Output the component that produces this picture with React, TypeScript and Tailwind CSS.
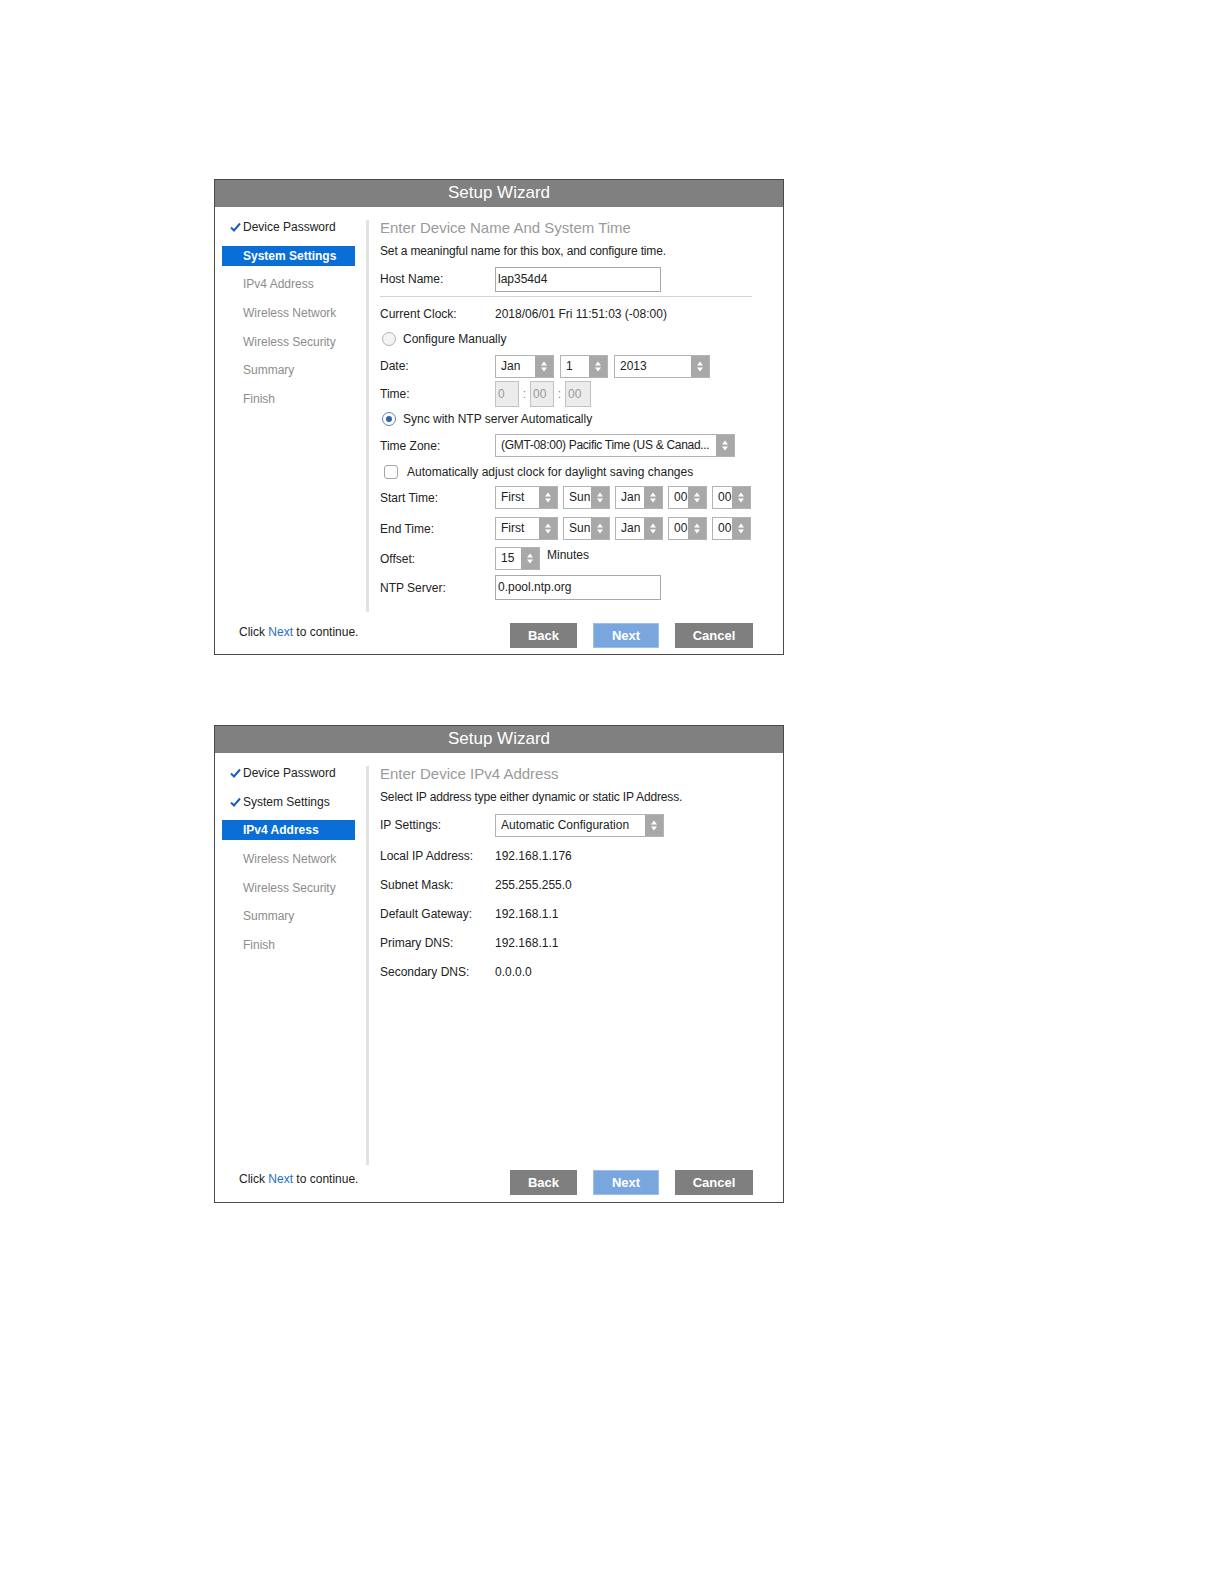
import React from "react";

const FONT = { fontFamily: '"Liberation Sans", Arial, sans-serif' };

// little up/down arrows used on every select box
const Spin = () => (
  <svg width="8" height="13" viewBox="0 0 8 13">
    <path d="M4 1.5L7 5.5H1Z" fill="#fff" />
    <path d="M4 11.5L1 7.5H7Z" fill="#fff" />
  </svg>
);

const Check = () => (
  <svg width="11" height="10" viewBox="0 0 11 10" className="absolute left-[8px] top-[5px]">
    <path d="M1 5.5L4 8.5L10 1.5" stroke="#1a5fb8" strokeWidth="2" fill="none" />
  </svg>
);

const Sel = ({ v, className, textClass = "" }: { v: string; className: string; textClass?: string }) => (
  <div className={`flex h-[23px] border border-[#b3b3b3] bg-white ${className}`}>
    <span className={`flex-1 overflow-hidden whitespace-nowrap pl-[5px] text-[12px] leading-[21px] text-[#222] ${textClass}`}>{v}</span>
    <span className="flex w-[18px] shrink-0 items-center justify-center bg-[#a8a8a8]">
      <Spin />
    </span>
  </div>
);

const Row = ({ label, className, children }: { label: string; className: string; children?: React.ReactNode }) => (
  <div className={`flex items-center ${className}`}>
    <span className="w-[115px] shrink-0 text-[12px] text-[#222]">{label}</span>
    {children}
  </div>
);

const Radio = ({ on }: { on?: boolean }) => (
  <span
    className={`flex h-[14px] w-[14px] items-center justify-center rounded-full border ${
      on ? "border-[#5b7fb5] bg-white" : "border-[#b0b0b0] bg-[#f4f4f4]"
    }`}
  >
    {on && <span className="h-[6px] w-[6px] rounded-full bg-[#2c63b5]" />}
  </span>
);

const steps = ["Device Password", "System Settings", "IPv4 Address", "Wireless Network", "Wireless Security", "Summary", "Finish"];

const Sidebar = ({ current }: { current: number }) => (
  <div className="flex w-[133px] flex-col gap-[8.67px]">
    {steps.map((s, i) => (
      <div
        key={s}
        className={`relative h-[20px] pl-[21px] text-[12px] leading-[20px] ${
          i === current ? "bg-[#0a6ed7] font-bold text-white" : i < current ? "text-[#222]" : "text-[#8c8c8c]"
        }`}
      >
        {i < current && <Check />}
        {s}
      </div>
    ))}
  </div>
);

const Footer = ({ className }: { className: string }) => (
  <div className={`flex justify-between pl-[24px] pr-[30px] ${className}`}>
    <span className="mt-[1px] text-[12px] leading-[16px] text-[#222]">
      Click <span className="text-[#1f6fc6]">Next</span> to continue.
    </span>
    <div className="flex gap-[16px]">
      <button className="h-[25px] w-[67px] bg-[#7f7f7f] text-[13px] font-bold text-white">Back</button>
      <button className="h-[25px] w-[66px] border border-[#9cc0ec] bg-[#79a6dd] text-[13px] font-bold text-white">Next</button>
      <button className="h-[25px] w-[78px] bg-[#7f7f7f] text-[13px] font-bold text-white">Cancel</button>
    </div>
  </div>
);

const Panel = ({
  current,
  bodyClass,
  footerClass,
  children,
}: {
  current: number;
  bodyClass: string;
  footerClass: string;
  children: React.ReactNode;
}) => (
  <div className="w-[570px] border border-[#4a4a4a] bg-white">
    <div className="h-[27px] bg-[#808080] text-center text-[17px] leading-[26px] text-white">Setup Wizard</div>
    <div className={`flex pl-[7px] pt-[10px] ${bodyClass}`}>
      <Sidebar current={current} />
      <div className="ml-[11px] mt-[3px] w-[3px] bg-[#e2e2e2]" />
      <div className="ml-[11px] flex-1">{children}</div>
    </div>
    <Footer className={footerClass} />
  </div>
);

const TimeBox = ({ v, className }: { v: string; className: string }) => (
  <span className={`h-[26px] border border-[#c2c2c2] bg-[#ececec] pl-[2px] text-[12px] leading-[24px] text-[#999] ${className}`}>
    {v}
  </span>
);

const DstSelects = () => (
  <div className="flex gap-[5px]">
    <Sel v="First" className="w-[63px]" />
    <Sel v="Sun" className="w-[47px]" />
    <Sel v="Jan" className="w-[48px]" />
    <Sel v="00" className="w-[39px]" />
    <Sel v="00" className="w-[39px]" />
  </div>
);

export default function App() {
  return (
    <div className="pl-[214px] pt-[179px]" style={FONT}>
      <Panel current={1} bodyClass="h-[405px]" footerClass="pt-[11px] h-[42px]">
        <div className="h-[22px] text-[15px] leading-[22px] text-[#9a9a9a]">Enter Device Name And System Time</div>
        <div className="mt-[4px] h-[16px] text-[12px] leading-[16px] tracking-[-0.15px] text-[#222]">
          Set a meaningful name for this box, and configure time.
        </div>
        <Row label="Host Name:" className="mt-[7px] h-[26px]">
          <div className="h-[25px] w-[166px] border border-[#a9a9a9] pl-[2px] text-[12px] leading-[23px] text-[#222]">lap354d4</div>
        </Row>
        <div className="mt-[4px] w-[372px] border-t border-[#d4d4d4]" />
        <Row label="Current Clock:" className="mt-[7px] h-[20px]">
          <span className="text-[12px] text-[#222]">2018/06/01 Fri 11:51:03 (-08:00)</span>
        </Row>
        <div className="mt-[5px] flex h-[20px] items-center gap-[7px] pl-[2px] text-[12px] text-[#222]">
          <Radio />
          Configure Manually
        </div>
        <Row label="Date:" className="mt-[6px] h-[22px]">
          <div className="flex gap-[6px]">
            <Sel v="Jan" className="w-[59px]" />
            <Sel v="1" className="w-[48px]" />
            <Sel v="2013" className="w-[96px]" />
          </div>
        </Row>
        <Row label="Time:" className="mt-[4px] h-[26px]">
          <div className="flex items-center text-[12px] text-[#888]">
            <TimeBox v="0" className="w-[24px]" />
            <span className="w-[11px] text-center">:</span>
            <TimeBox v="00" className="w-[24px]" />
            <span className="w-[11px] text-center">:</span>
            <TimeBox v="00" className="w-[26px]" />
          </div>
        </Row>
        <div className="mt-[2px] flex h-[20px] items-center gap-[7px] pl-[2px] text-[12px] text-[#222]">
          <Radio on />
          Sync with NTP server Automatically
        </div>
        <Row label="Time Zone:" className="mt-[5px] h-[23px]">
          <Sel v="(GMT-08:00) Pacific Time (US & Canad..." className="w-[240px]" textClass="tracking-[-0.3px]" />
        </Row>
        <div className="mt-[5px] flex h-[20px] items-center gap-[9px] pl-[4px] text-[12px] text-[#222]">
          <span className="h-[14px] w-[14px] rounded-[3px] border border-[#a5a5a5] bg-white" />
          Automatically adjust clock for daylight saving changes
        </div>
        <Row label="Start Time:" className="mt-[4px] h-[23px]">
          <DstSelects />
        </Row>
        <Row label="End Time:" className="mt-[8px] h-[23px]">
          <DstSelects />
        </Row>
        <Row label="Offset:" className="mt-[7px] h-[23px]">
          <Sel v="15" className="w-[45px]" />
          <span className="ml-[7px] self-start text-[12px] leading-[16px] text-[#222]">Minutes</span>
        </Row>
        <Row label="NTP Server:" className="mt-[5px] h-[25px]">
          <div className="h-[25px] w-[166px] border border-[#a9a9a9] pl-[2px] text-[12px] leading-[23px] text-[#222]">0.pool.ntp.org</div>
        </Row>
      </Panel>

      <div className="h-[70px]" />

      <Panel current={2} bodyClass="h-[412px]" footerClass="pt-[5px] h-[37px]">
        <div className="h-[22px] text-[15px] leading-[22px] text-[#9a9a9a]">Enter Device IPv4 Address</div>
        <div className="mt-[4px] h-[16px] text-[12px] leading-[16px] tracking-[-0.15px] text-[#222]">
          Select IP address type either dynamic or static IP Address.
        </div>
        <Row label="IP Settings:" className="mt-[7px] h-[26px]">
          <Sel v="Automatic Configuration" className="w-[169px]" />
        </Row>
        {[
          ["Local IP Address:", "192.168.1.176"],
          ["Subnet Mask:", "255.255.255.0"],
          ["Default Gateway:", "192.168.1.1"],
          ["Primary DNS:", "192.168.1.1"],
          ["Secondary DNS:", "0.0.0.0"],
        ].map(([k, v], i) => (
          <Row key={k} label={k} className={`${i === 0 ? "mt-[8px]" : "mt-[9px]"} h-[20px]`}>
            <span className="text-[12px] text-[#222]">{v}</span>
          </Row>
        ))}
      </Panel>
    </div>
  );
}
